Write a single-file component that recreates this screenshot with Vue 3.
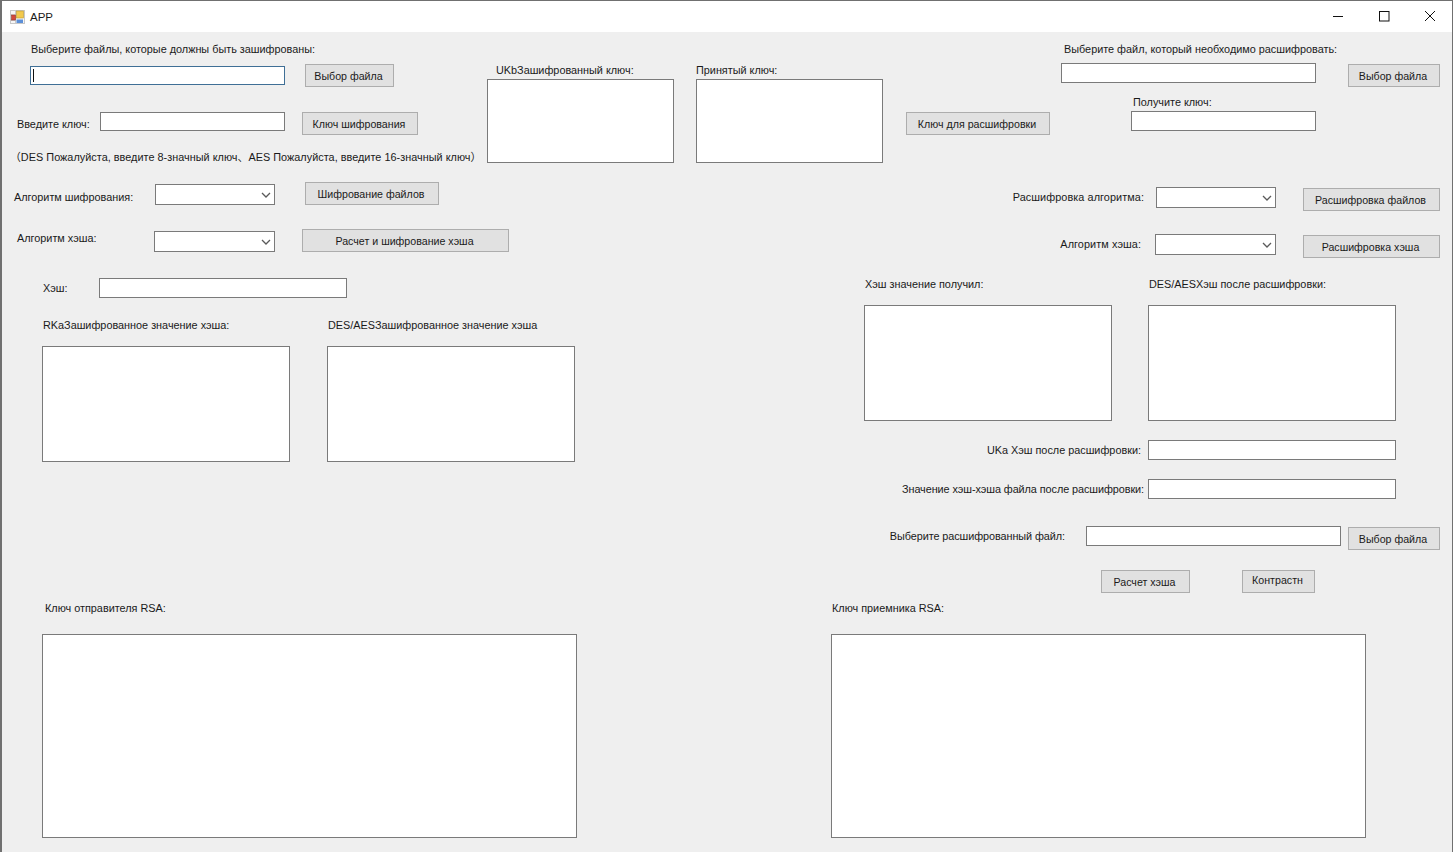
<template>
  <div class="window">
    <div class="titlebar">
      <div class="title-left">
        <svg class="app-icon" width="15" height="15" viewBox="0 0 15 15">
          <rect x="0.5" y="1.5" width="14" height="13" fill="#f6f6f6" stroke="#c8c8c8" />
          <path d="M0.5 6h5M5.5 1.5v13M0.5 11.5h5" stroke="#c8c8c8" fill="none" />
          <rect x="1.5" y="6" width="4" height="5" fill="#d4483c" stroke="#8f3a30" stroke-width="0.6" />
          <rect x="6.5" y="2" width="7" height="7" fill="#f2c94c" stroke="#b8952c" stroke-width="0.6" />
          <rect x="6.5" y="10.5" width="6.5" height="3.5" fill="#5b8fd8" />
        </svg>
        <span class="title-text">APP</span>
      </div>
      <div class="win-buttons">
        <svg width="12" height="12" viewBox="0 0 12 12"><path d="M1 6.5h10" stroke="#111" fill="none" /></svg>
        <svg width="12" height="12" viewBox="0 0 12 12"><rect x="1.5" y="1.5" width="9.5" height="9.5" stroke="#111" fill="none" /></svg>
        <svg width="12" height="12" viewBox="0 0 12 12"><path d="M1 1l10 10M11 1L1 11" stroke="#111" fill="none" /></svg>
      </div>
    </div>

    <section class="top">
      <div class="encrypt-col">
        <div class="lbl pick-label">Выберите файлы, которые должны быть зашифрованы:</div>
        <div class="pick-row">
          <input class="field focused w255" />
          <button class="btn pick-btn">Выбор файла</button>
        </div>
        <div class="key-row">
          <div class="lbl key-label">Введите ключ:</div>
          <input class="field w185" />
          <button class="btn key-btn">Ключ шифрования</button>
        </div>
        <div class="lbl hint">（DES Пожалуйста, введите 8-значный ключ、AES Пожалуйста, введите 16-значный ключ）</div>
      </div>

      <div class="keys-col">
        <div class="key-box first">
          <div class="lbl box-label-a">UKbЗашифрованный ключ:</div>
          <textarea class="area"></textarea>
        </div>
        <div class="key-box second">
          <div class="lbl">Принятый ключ:</div>
          <textarea class="area"></textarea>
        </div>
        <button class="btn decrypt-key-btn">Ключ для расшифровки</button>
      </div>

      <div class="decrypt-col">
        <div class="lbl dec-label">Выберите файл, который необходимо расшифровать:</div>
        <div class="dec-row">
          <input class="field tall w255" />
          <button class="btn file-btn">Выбор файла</button>
        </div>
        <div class="lbl get-label">Получите ключ:</div>
        <input class="field tall w185 get-input" />
      </div>
    </section>

    <section class="algos">
      <div class="algos-left">
        <div class="algo-row row-a">
          <div class="lbl algo-label-a">Алгоритм шифрования:</div>
          <div class="combo"><svg width="10" height="6" viewBox="0 0 10 6"><path d="M1 1l4 4 4-4" /></svg></div>
          <button class="btn encrypt-btn">Шифрование файлов</button>
        </div>
        <div class="algo-row row-b">
          <div class="lbl algo-label-b">Алгоритм хэша:</div>
          <div class="combo wide"><svg width="10" height="6" viewBox="0 0 10 6"><path d="M1 1l4 4 4-4" /></svg></div>
          <button class="btn hash-btn">Расчет и шифрование хэша</button>
        </div>
      </div>
      <div class="algos-right">
        <div class="algo-row end row-c">
          <div class="lbl end-label">Расшифровка алгоритма:</div>
          <div class="combo"><svg width="10" height="6" viewBox="0 0 10 6"><path d="M1 1l4 4 4-4" /></svg></div>
          <button class="btn dec-btn">Расшифровка файлов</button>
        </div>
        <div class="algo-row end row-d">
          <div class="lbl end-label narrow">Алгоритм хэша:</div>
          <div class="combo wide"><svg width="10" height="6" viewBox="0 0 10 6"><path d="M1 1l4 4 4-4" /></svg></div>
          <button class="btn dec-btn">Расшифровка хэша</button>
        </div>
      </div>
    </section>

    <section class="hashes">
      <div class="hash-left">
        <div class="hash-row">
          <div class="lbl hash-label">Хэш:</div>
          <input class="field tall w248" />
        </div>
        <div class="pair pair-left">
          <div>
            <div class="lbl indent">RKaЗашифрованное значение хэша:</div>
            <textarea class="area big"></textarea>
          </div>
          <div>
            <div class="lbl indent">DES/AESЗашифрованное значение хэша</div>
            <textarea class="area big"></textarea>
          </div>
        </div>
      </div>

      <div class="hash-right">
        <div class="pair pair-right">
          <div>
            <div class="lbl indent">Хэш значение получил:</div>
            <textarea class="area big"></textarea>
          </div>
          <div>
            <div class="lbl indent">DES/AESХэш после расшифровки:</div>
            <textarea class="area big"></textarea>
          </div>
        </div>
        <div class="result-row first-result">
          <div class="lbl result-label gap7">UKa Хэш после расшифровки:</div>
          <input class="field tall w248" />
        </div>
        <div class="result-row second-result">
          <div class="lbl result-label gap4 tight">Значение хэш-хэша файла после расшифровки:</div>
          <input class="field tall w248" />
        </div>
        <div class="choose-row">
          <div class="lbl result-label gap21 loose">Выберите расшифрованный файл:</div>
          <input class="field tall w255" />
          <button class="btn file-btn choose-btn">Выбор файла</button>
        </div>
        <div class="compare-row">
          <button class="btn calc-btn">Расчет хэша</button>
          <button class="btn compare-btn">Контрастн</button>
        </div>
      </div>
    </section>

    <section class="rsa">
      <div class="rsa-left">
        <div class="lbl rsa-label-a">Ключ отправителя RSA:</div>
        <textarea class="area huge"></textarea>
      </div>
      <div class="rsa-right">
        <div class="lbl indent">Ключ приемника RSA:</div>
        <textarea class="area huge"></textarea>
      </div>
    </section>
  </div>
</template>

<script setup>
</script>

<style>
html, body { margin: 0; background: #fff; }
</style>

<style scoped>
.window {
  position: relative;
  box-sizing: border-box;
  width: 1456px;
  height: 852px;
  overflow: hidden;
  background: #efefef;
  background-clip: padding-box;
  border-right: 3px solid #fff;
  color: #1a1a1a;
  font-family: "Liberation Sans", Arial, "Noto Sans CJK SC", sans-serif;
  font-size: 10.85px;
}
.window::after {
  content: "";
  position: absolute;
  inset: 0;
  border: solid #707070;
  border-width: 1px 1px 0 2px;
  pointer-events: none;
}

.titlebar { display: flex; justify-content: space-between; align-items: center; height: 32px; background: #fff; }
.title-left { display: flex; align-items: center; padding-left: 10px; }
.title-text { margin: 1px 0 0 5px; font-size: 11.5px; }
.win-buttons { display: flex; gap: 34px; padding-right: 17px; }

.lbl { height: 14px; line-height: 14px; white-space: nowrap; }
.indent { margin-left: 1px; }

.field, .area, .combo, .btn { box-sizing: border-box; display: block; margin: 0; padding: 0; flex: none; }
.field, .area, .combo { background: #fff; border: 1px solid #7a7a7a; border-radius: 0; outline: none; resize: none; }
.field { height: 19px; }
.field.tall { height: 20px; }
.w185 { width: 185px; }
.w248 { width: 248px; }
.w255 { width: 255px; }
.focused {
  border-color: #3f6f96;
  background: linear-gradient(#111, #111) 2px 2px / 1px 13px no-repeat, #fff;
}
.area { width: 187px; height: 84px; margin-top: 2px; }
.area.big { width: 248px; height: 116px; margin-top: 14px; }
.area.huge { width: 535px; height: 204px; margin-top: 19px; }

.btn {
  height: 23px;
  padding-right: 2px;
  background: #e1e1e1;
  border: 1px solid #adadad;
  border-radius: 0;
  color: #1a1a1a;
  font-family: inherit;
  font-size: 10.65px;
  white-space: nowrap;
}

.combo { display: flex; justify-content: flex-end; align-items: center; width: 120px; height: 21px; padding-right: 3px; }
.combo.wide { width: 121px; }
.combo path { fill: none; stroke: #5a5a5a; stroke-width: 1.3; }

/* top band */
.top { display: flex; height: 143px; }
.encrypt-col { width: 480px; flex: none; }
.pick-label { margin: 10px 0 0 31px; }
.pick-row { display: flex; margin: 8px 0 0 30px; }
.pick-row .field { margin-top: 2px; }
.pick-btn { width: 89px; margin-left: 20px; }
.key-row { display: flex; margin: 25px 0 0 17px; }
.key-label { width: 83px; margin-top: 5px; }
.key-btn { width: 116px; margin-left: 17px; }
.hint { margin: 15px 0 0 10px; letter-spacing: 0.03px; }

.keys-col { display: flex; flex: none; }
.key-box { margin-top: 31px; }
.key-box.first { margin-left: 7px; }
.key-box.second { margin-left: 22px; }
.box-label-a { margin-left: 9px; }
.decrypt-key-btn { width: 144px; margin: 80px 0 0 23px; }

.decrypt-col { margin-left: 11px; }
.dec-label { margin: 10px 0 0 3px; }
.dec-row { display: flex; margin-top: 7px; }
.file-btn { width: 92px; margin: 1px 0 0 32px; }
.get-label { margin: 8px 0 0 72px; }
.get-input { margin: 2px 0 0 70px; }

/* algorithm band */
.algos { display: flex; justify-content: space-between; height: 90px; padding-right: 13px; }
.algo-row { display: flex; }
.algo-row.end { justify-content: flex-end; }
.row-a { margin: 7px 0 0 14px; }
.row-a .combo, .row-b .combo { margin-top: 2px; }
.algo-label-a { width: 141px; margin-top: 8px; }
.encrypt-btn { width: 134px; margin-left: 30px; }
.row-b { margin: 24px 0 0 17px; }
.algo-label-b { width: 137px; margin-top: 2px; }
.hash-btn { width: 207px; margin-left: 27px; }
.row-c { margin-top: 12px; }
.row-d { margin-top: 23px; }
.end-label { margin: 3px 12px 0 0; letter-spacing: 0.08px; }
.end-label.narrow { margin-right: 14px; }
.dec-btn { width: 137px; margin: 1px 0 0 27px; }

/* hash band */
.hashes { display: flex; height: 330px; }
.hash-left { width: 533px; margin-left: 42px; flex: none; }
.hash-row { display: flex; margin-top: 13px; }
.hash-label { width: 56px; margin: 3px 0 0 1px; }
.pair { display: flex; }
.pair-left { gap: 37px; margin-top: 20px; }
.pair-right { gap: 36px; margin-top: 12px; }

.hash-right { width: 576px; margin-left: 289px; flex: none; }
.result-row { display: flex; justify-content: flex-end; padding-right: 44px; margin-top: 19px; }
.result-label { margin-top: 3px; }
.gap7 { margin-right: 7px; }
.gap4 { margin-right: 4px; }
.gap21 { margin-right: 21px; }
.tight { letter-spacing: -0.07px; }
.loose { letter-spacing: -0.07px; }
.choose-row { display: flex; justify-content: flex-end; margin-top: 27px; }
.choose-btn { margin-left: 7px; }
.compare-row { display: flex; gap: 52px; margin: 20px 0 0 237px; }
.calc-btn { width: 89px; }
.compare-btn { width: 73px; padding-bottom: 3px; }

/* rsa band */
.rsa { display: flex; }
.rsa-left { margin: 6px 0 0 42px; }
.rsa-right { margin: 6px 0 0 254px; }
.rsa-label-a { margin-left: 3px; }
</style>
